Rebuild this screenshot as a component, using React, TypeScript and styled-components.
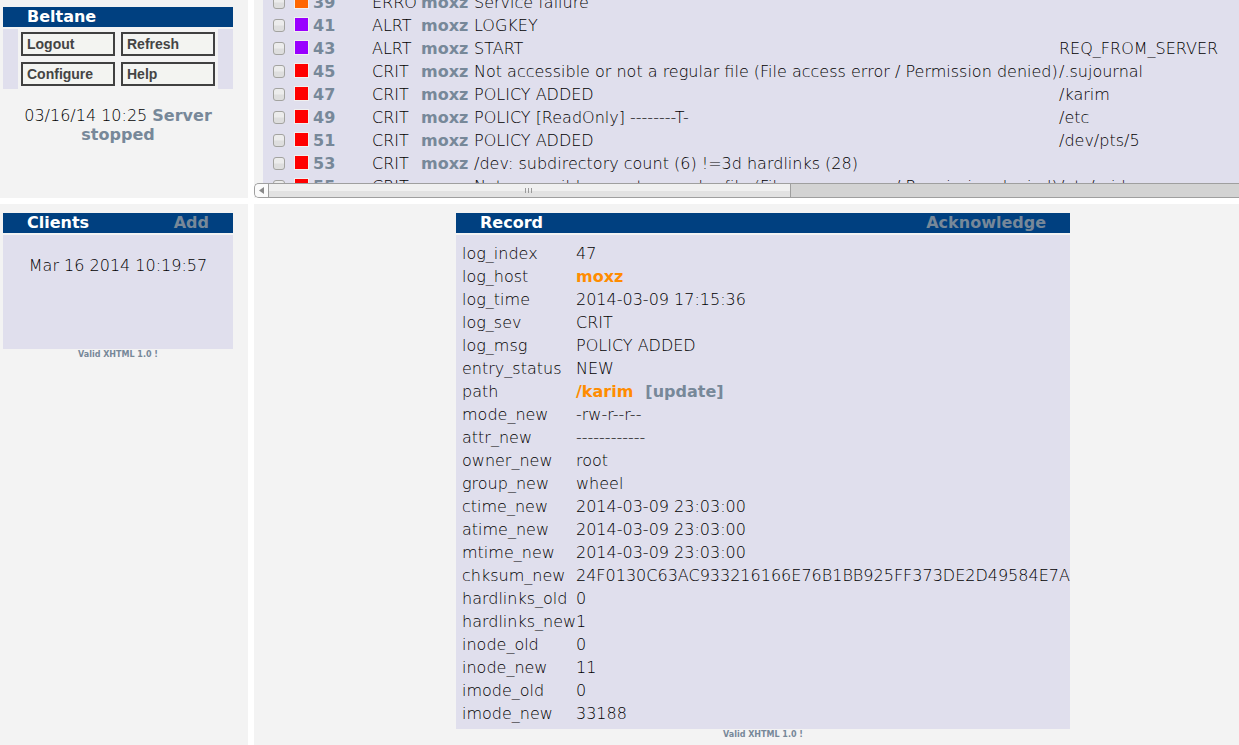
import React, { useLayoutEffect, useRef } from "react";
import styled, { createGlobalStyle } from "styled-components";

const color = {
  page: "#f3f3f3",
  panel: "#e0dfed",
  header: "#004080",
  link: "#778899",
  accent: "#ff8c00",
  edge: "#9f9f9f",
};

const GlobalStyle = createGlobalStyle`
  * { box-sizing: border-box; }
  html, body { margin: 0; background: #ffffff; }
  body {
    font-family: "DejaVu Sans Light", "DejaVu Sans", sans-serif;
    font-size: 16px;
    font-weight: 200;
    line-height: 19px;
    color: #000000;
  }
`;

const Frames = styled.div`
  display: grid;
  grid-template-columns: 248px minmax(0, 1fr);
  grid-template-rows: 198px auto;
  gap: 6px;
  min-height: 100vh;
`;

const SidePane = styled.aside<{ $top: number }>`
  background: ${color.page};
  padding: ${(p) => p.$top}px 15px 0 3px;
`;

const ListPane = styled.section`
  display: flex;
  flex-direction: column;
  min-height: 0;
  background: ${color.page};
`;

const RecordPane = styled.main`
  display: flex;
  flex-direction: column;
  align-items: center;
  background: ${color.page};
  padding: 9px 0 0 33px;
`;

const Link = styled.a<{ $accent?: boolean }>`
  font-family: "DejaVu Sans", sans-serif;
  font-weight: bold;
  color: ${(p) => (p.$accent ? color.accent : color.link)};
  text-decoration: none;
`;

const PanelHeader = styled.header`
  display: flex;
  justify-content: space-between;
  height: 20px;
  margin-bottom: 2px;
  padding: 0 24px;
  background: ${color.header};
`;

const PanelTitle = styled.h2`
  margin: 0;
  font-family: "DejaVu Sans", sans-serif;
  font-size: 16px;
  font-weight: bold;
  color: #ffffff;
`;

const Menu = styled.div`
  display: flex;
  justify-content: center;
  background: ${color.panel};
`;

const MenuGrid = styled.nav`
  display: grid;
  grid-template-columns: 94px 94px;
  gap: 6px;
  padding: 3px;
  background: ${color.page};
`;

const MenuButton = styled.button`
  height: 24px;
  padding: 0 4px;
  border: 2px solid #404040;
  background: #f3f4f1;
  color: #444444;
  font: bold 14px/20px "Liberation Sans", sans-serif;
  text-align: left;
`;

const Status = styled.p`
  margin: 17px 15px 0;
  text-align: center;
`;

const ClientBody = styled.div`
  height: 114px;
  padding-top: 21px;
  background: ${color.panel};
  text-align: center;
`;

const Footer = styled.footer`
  font-size: 8px;
  line-height: 12px;
  text-align: center;
`;

const ListViewport = styled.div`
  flex: 1;
  min-height: 0;
  overflow: hidden;
  padding-left: 9px;
`;

const LogTable = styled.table`
  width: 1600px;
  table-layout: fixed;
  border-collapse: collapse;
  background: ${color.panel};
  tr { height: 23px; }
  td { padding: 0; white-space: nowrap; vertical-align: middle; }
`;

const Check = styled.input`
  appearance: none;
  display: block;
  width: 12px;
  height: 13px;
  margin: 0 0 0 10px;
  border: 1px solid #a3a3a0;
  border-radius: 3px;
  background: linear-gradient(#ececec 45%, #dedede 55%);
`;

const Swatch = styled.span<{ $fill: string }>`
  display: block;
  width: 15px;
  height: 15px;
  margin-bottom: 2px;
  border: 1px solid #f1f0f0;
  background: ${(p) => p.$fill};
`;

const Scrollbar = styled.div`
  display: flex;
  height: 15px;
  overflow: hidden;
  border: 1px solid ${color.edge};
  border-right: 0;
  border-radius: 5px 0 0 5px;
  background: #d3d3d3;
`;

const ScrollArrow = styled.button`
  display: flex;
  align-items: center;
  justify-content: center;
  width: 14px;
  padding: 0;
  border: 0;
  border-right: 1px solid ${color.edge};
  background: #fbfbfb;
`;

const ScrollThumb = styled.div`
  display: flex;
  align-items: center;
  justify-content: center;
  width: 53%;
  border-right: 1px solid ${color.edge};
  background: linear-gradient(#f0f0f0 50%, #e2e2e2 50%);
`;

const RecordPanel = styled.section`
  width: 614px;
`;

const RecordBody = styled.div`
  padding: 7px 0 4px 6px;
  background: ${color.panel};
`;

const RecordTable = styled.table`
  width: 100%;
  table-layout: fixed;
  border-collapse: collapse;
  tr { height: 23px; }
  th { padding: 0; font-weight: inherit; text-align: left; }
  td { padding: 0; white-space: nowrap; }
`;

const Update = styled(Link)`
  margin-left: 12px;
`;

const RED = "#ff0000";
const PURPLE = "#9900ff";
const ORANGE = "#ff6600";
const DENIED =
  "Not accessible or not a regular file (File access error / Permission denied)";

const logs = [
  { id: 39, fill: ORANGE, sev: "ERRO", msg: "Service failure", path: "" },
  { id: 41, fill: PURPLE, sev: "ALRT", msg: "LOGKEY", path: "" },
  { id: 43, fill: PURPLE, sev: "ALRT", msg: "START", path: "REQ_FROM_SERVER" },
  { id: 45, fill: RED, sev: "CRIT", msg: DENIED, path: "/.sujournal" },
  { id: 47, fill: RED, sev: "CRIT", msg: "POLICY ADDED", path: "/karim" },
  { id: 49, fill: RED, sev: "CRIT", msg: "POLICY [ReadOnly] --------T-", path: "/etc" },
  { id: 51, fill: RED, sev: "CRIT", msg: "POLICY ADDED", path: "/dev/pts/5" },
  { id: 53, fill: RED, sev: "CRIT", msg: "/dev: subdirectory count (6) !=3d hardlinks (28)", path: "" },
  { id: 55, fill: RED, sev: "CRIT", msg: DENIED, path: "/etc/raid" },
];

const record: [string, React.ReactNode][] = [
  ["log_index", "47"],
  ["log_host", <Link $accent href="#host">moxz</Link>],
  ["log_time", "2014-03-09 17:15:36"],
  ["log_sev", "CRIT"],
  ["log_msg", "POLICY ADDED"],
  ["entry_status", "NEW"],
  ["path", <><Link $accent href="#path">/karim</Link><Update href="#update">[update]</Update></>],
  ["mode_new", "-rw-r--r--"],
  ["attr_new", "------------"],
  ["owner_new", "root"],
  ["group_new", "wheel"],
  ["ctime_new", "2014-03-09 23:03:00"],
  ["atime_new", "2014-03-09 23:03:00"],
  ["mtime_new", "2014-03-09 23:03:00"],
  ["chksum_new", "24F0130C63AC933216166E76B1BB925FF373DE2D49584E7A"],
  ["hardlinks_old", "0"],
  ["hardlinks_new", "1"],
  ["inode_old", "0"],
  ["inode_new", "11"],
  ["imode_old", "0"],
  ["imode_new", "33188"],
];

function Validity() {
  return (
    <Footer>
      <Link href="#validate">Valid XHTML 1.0 !</Link>
    </Footer>
  );
}

function LogList() {
  const viewport = useRef<HTMLDivElement>(null);
  useLayoutEffect(() => {
    if (viewport.current) viewport.current.scrollTop = 9;
  }, []);
  return (
    <ListPane>
      <ListViewport ref={viewport}>
        <LogTable>
          <colgroup>
            <col width={31} />
            <col width={19} />
            <col width={59} />
            <col width={49} />
            <col width={53} />
            <col width={585} />
            <col />
          </colgroup>
          <tbody>
            {logs.map((row) => (
              <tr key={row.id}>
                <td><Check type="checkbox" aria-label={`Select ${row.id}`} /></td>
                <td><Swatch $fill={row.fill} /></td>
                <td><Link href={`#log-${row.id}`}>{row.id}</Link></td>
                <td>{row.sev}</td>
                <td><Link href="#moxz">moxz</Link></td>
                <td>{row.msg}</td>
                <td>{row.path}</td>
              </tr>
            ))}
          </tbody>
        </LogTable>
      </ListViewport>
      <Scrollbar>
        <ScrollArrow aria-label="Scroll left">
          <svg width="5" height="7" viewBox="0 0 5 7">
            <path d="M5 0v7L0 3.500z" fill="#8a8a8a" />
          </svg>
        </ScrollArrow>
        <ScrollThumb>
          <svg width="8" height="5" viewBox="0 0 8 5">
            <path d="M.5 0v5M3.500 0v5M6.500 0v5" stroke="#999999" />
          </svg>
        </ScrollThumb>
      </Scrollbar>
    </ListPane>
  );
}

export default function App() {
  return (
    <>
      <GlobalStyle />
      <Frames>
        <SidePane $top={7}>
          <PanelHeader><PanelTitle>Beltane</PanelTitle></PanelHeader>
          <Menu>
            <MenuGrid>
              {["Logout", "Refresh", "Configure", "Help"].map((label) => (
                <MenuButton key={label}>{label}</MenuButton>
              ))}
            </MenuGrid>
          </Menu>
          <Status>03/16/14 10:25 <Link href="#server">Server stopped</Link></Status>
        </SidePane>
        <LogList />
        <SidePane $top={9}>
          <PanelHeader>
            <PanelTitle>Clients</PanelTitle>
            <Link href="#add">Add</Link>
          </PanelHeader>
          <ClientBody>Mar 16 2014 10:19:57</ClientBody>
          <Validity />
        </SidePane>
        <RecordPane>
          <RecordPanel>
            <PanelHeader>
              <PanelTitle>Record</PanelTitle>
              <Link href="#acknowledge">Acknowledge</Link>
            </PanelHeader>
            <RecordBody>
              <RecordTable>
                <colgroup>
                  <col width={114} />
                  <col />
                </colgroup>
                <tbody>
                  {record.map(([name, value]) => (
                    <tr key={name}>
                      <th scope="row">{name}</th>
                      <td>{value}</td>
                    </tr>
                  ))}
                </tbody>
              </RecordTable>
            </RecordBody>
            <Validity />
          </RecordPanel>
        </RecordPane>
      </Frames>
    </>
  );
}
